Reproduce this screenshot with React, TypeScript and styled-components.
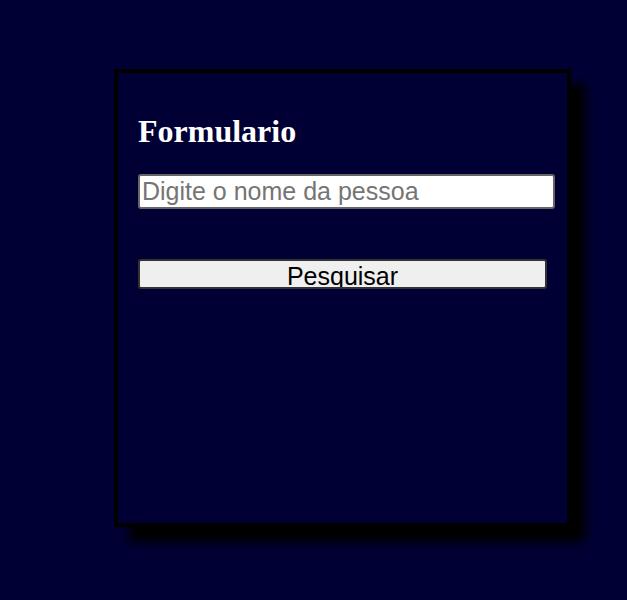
import styled, { createGlobalStyle } from 'styled-components';

const GlobalStyle = createGlobalStyle`
  html, body {
    margin: 0;
    padding: 0;
    background-color: #000035;
    min-height: 100vh;
  }
`;

const Page = styled.div`
  display: flex;
  align-items: flex-start;
  padding: 69px 0 0 114px;
  min-height: 100vh;
  box-sizing: border-box;
`;

const Card = styled.div`
  width: 409px;
  height: 410px;
  padding: 20px;
  background-color: #000035;
  border: 4px solid #000;
  box-shadow: 15px 15px 10px #000;
  display: flex;
  flex-direction: column;
`;

const Title = styled.h2`
  margin: 20px 0 24px;
  font-family: 'Liberation Serif', 'Times New Roman', serif;
  font-size: 32px;
  font-weight: bold;
  color: #fff;
  line-height: 37px;
`;

const Input = styled.input`
  width: 100%;
  box-sizing: content-box;
  padding: 1px 2px;
  margin: 0 0 50px;
  height: 29px;
  font-family: 'Liberation Sans', Arial, sans-serif;
  font-size: 25px;
  color: #000;
  background: #fff;
  border: 2px solid #666;
  border-radius: 3px;
  outline: none;

  &::placeholder {
    color: #757575;
  }
`;

const Button = styled.button`
  display: flex;
  justify-content: center;
  align-items: flex-start;
  width: 100%;
  height: 30px;
  box-sizing: border-box;
  padding: 1px 0 0;
  font-family: 'Liberation Sans', Arial, sans-serif;
  font-size: 25px;
  line-height: 28.75px;
  color: #000;
  background-color: #efefef;
  border: 2px solid #333;
  border-radius: 3px;
  overflow: hidden;
  cursor: pointer;
`;

const App = () => {
  return (
    <>
      <GlobalStyle />
      <Page>
        <Card>
          <Title>Formulario</Title>
          <Input type="text" placeholder="Digite o nome da pessoa" />
          <Button>Pesquisar</Button>
        </Card>
      </Page>
    </>
  );
};

export default App;
